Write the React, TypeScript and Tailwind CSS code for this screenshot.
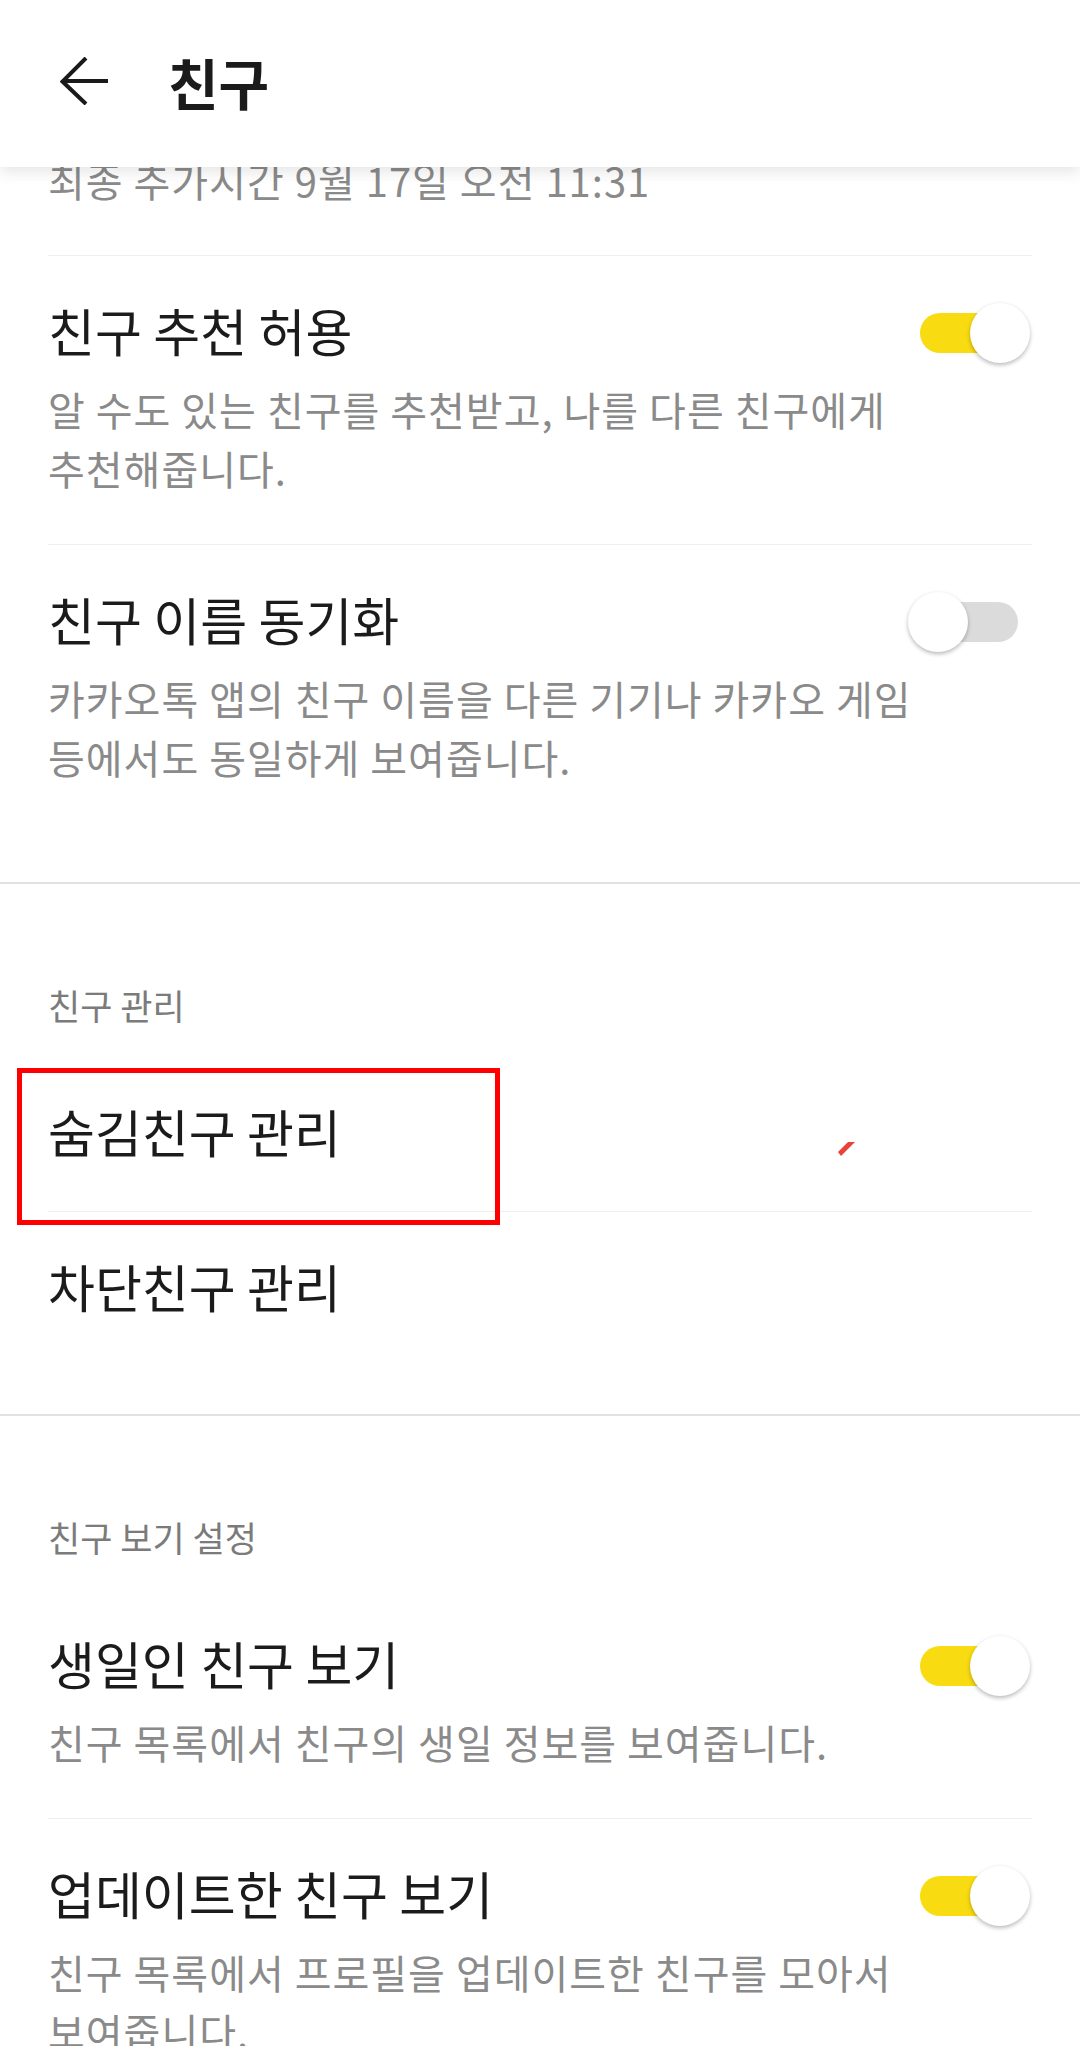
import React from "react";

const FONT = '"Noto Sans CJK KR", "Noto Sans", sans-serif';

function Toggle({ on }: { on: boolean }) {
  return (
    <div className="relative mt-[1px] h-[60px] w-[122px] shrink-0">
      <div
        className={`absolute left-[12px] top-[10px] h-[40px] w-[98px] rounded-full ${
          on ? "bg-[#F9DB12]" : "bg-[#DBDBDB]"
        }`}
      />
      <div
        className={`absolute top-0 h-[60px] w-[60px] rounded-full bg-white shadow-[0_2px_4px_rgba(0,0,0,0.28)] ${
          on ? "left-[62px]" : "left-0"
        }`}
      />
    </div>
  );
}

function ToggleRow({ title, lines, on }: { title: string; lines: string[]; on: boolean }) {
  return (
    <div className="flex items-start pl-12 pr-[50px] pt-[46px] pb-[46px]">
      <div className="min-w-0 flex-1">
        <div className="text-[51px] leading-[56px] text-[#1b1b1b]">{title}</div>
        <div className="mt-[22px] text-[40px] leading-[59px] tracking-[1px] text-[#8a8a8a]">
          {lines.map((l, i) => (
            <div key={i} className="whitespace-nowrap">
              {l}
            </div>
          ))}
        </div>
      </div>
      <Toggle on={on} />
    </div>
  );
}

function InnerDivider() {
  return <div className="mx-12 h-px bg-[#eeeeee]" />;
}

function FullDivider() {
  return <div className="h-[2px] bg-[#e2e2e2]" />;
}

function SectionHeader({ children }: { children: React.ReactNode }) {
  return (
    <div className="mb-[32px] px-12 pt-[101px] text-[35px] leading-[40px] text-[#7b7b7b]">
      {children}
    </div>
  );
}

export default function App() {
  return (
    <div className="h-[2046px] w-[1080px] overflow-hidden bg-white" style={{ fontFamily: FONT }}>
      <header className="relative z-10 flex h-[167px] items-center bg-white pb-[5px] shadow-[0_5px_14px_rgba(0,0,0,0.10)]">
        <svg className="ml-[60px] h-[48px] w-[48px]" viewBox="0 0 48 48" fill="none">
          <path d="M2 24H48M26 1L2.5 24.5L26 47" stroke="#1a1a1a" strokeWidth="4" />
        </svg>
        <h1 className="ml-[60px] text-[55px] font-bold leading-none text-[#1b1b1b]">친구</h1>
      </header>

      <main>
        <div className="-mt-[16px] px-12 pb-[45px] text-[40px] leading-[59px] tracking-[1px] text-[#8a8a8a]">
          최종 추가시간 9월 17일 오전 11:31
        </div>
        <InnerDivider />
        <ToggleRow
          title="친구 추천 허용"
          lines={["알 수도 있는 친구를 추천받고, 나를 다른 친구에게", "추천해줍니다."]}
          on
        />
        <InnerDivider />
        <ToggleRow
          title="친구 이름 동기화"
          lines={["카카오톡 앱의 친구 이름을 다른 기기나 카카오 게임", "등에서도 동일하게 보여줍니다."]}
          on={false}
        />
        <div className="h-[49px]" />
        <FullDivider />

        <section>
          <SectionHeader>친구 관리</SectionHeader>
          <div className="relative h-[154px] px-12 pt-[46px]">
            <div className="text-[51px] leading-[56px] text-[#1b1b1b]">숨김친구 관리</div>
            <div className="pointer-events-none absolute left-[17px] top-[11px] h-[157px] w-[483px] border-[5px] border-[#ff0000]" />
            <svg className="absolute left-[836px] top-[83px] h-[18px] w-[22px]" viewBox="0 0 22 18">
              <polygon points="12,2 19,2 5,16 2,12" fill="#e8433a" />
            </svg>
          </div>
          <InnerDivider />
          <div className="h-[154px] px-12 pt-[46px]">
            <div className="text-[51px] leading-[56px] text-[#1b1b1b]">차단친구 관리</div>
          </div>
        </section>
        <div className="h-[48px]" />
        <FullDivider />

        <section>
          <SectionHeader>친구 보기 설정</SectionHeader>
          <ToggleRow title="생일인 친구 보기" lines={["친구 목록에서 친구의 생일 정보를 보여줍니다."]} on />
          <InnerDivider />
          <ToggleRow
            title="업데이트한 친구 보기"
            lines={["친구 목록에서 프로필을 업데이트한 친구를 모아서", "보여줍니다."]}
            on
          />
        </section>
      </main>
    </div>
  );
}
